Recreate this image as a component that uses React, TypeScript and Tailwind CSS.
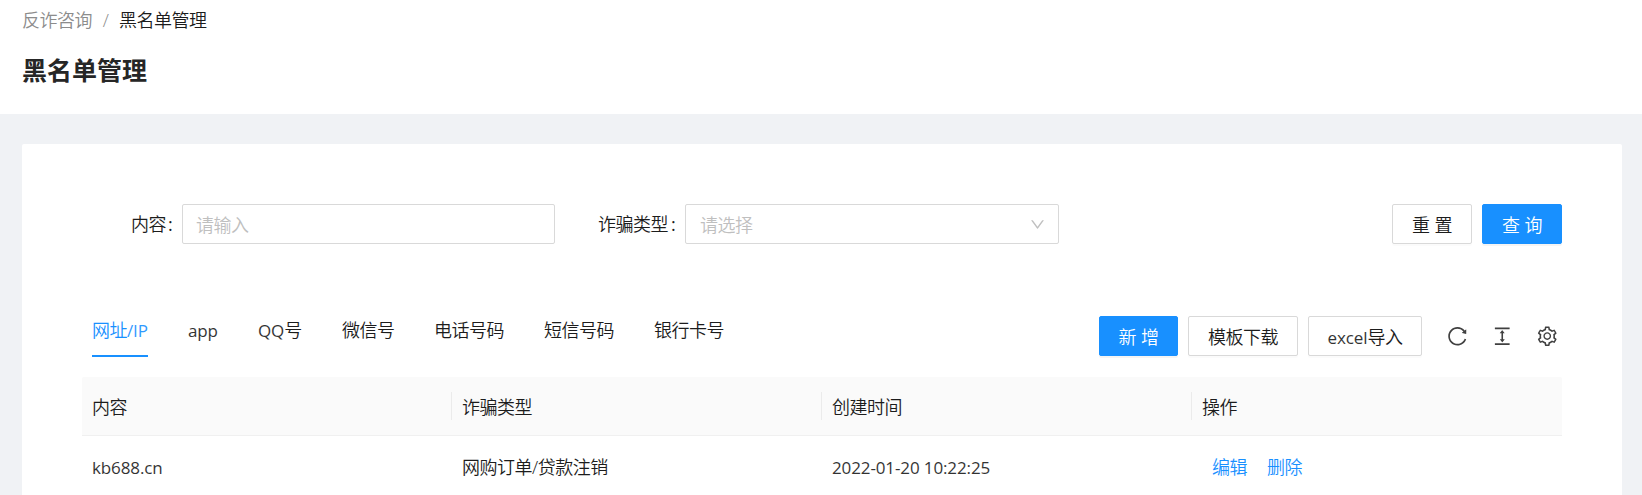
import type { ReactNode } from "react";
import {
  AiOutlineColumnHeight,
  AiOutlineDown,
  AiOutlineReload,
  AiOutlineSetting,
} from "react-icons/ai";

function Latin({ children }: { children: ReactNode }) {
  return <span className="text-[17px] font-normal tracking-[-0.12px] opacity-90">{children}</span>;
}

const tabs = [
  { key: "url", label: <>网址<Latin>/IP</Latin></>, width: "w-14" },
  { key: "app", label: <Latin>app</Latin>, width: "w-[30px]" },
  { key: "qq", label: <><Latin>QQ</Latin>号</>, width: "w-11" },
  { key: "wechat", label: "微信号", width: "w-[52px]" },
  { key: "phone", label: "电话号码", width: "w-[70px]" },
  { key: "sms", label: "短信号码", width: "w-[70px]" },
  { key: "bank", label: "银行卡号", width: "w-[70px]" },
];

const columns = ["内容", "诈骗类型", "创建时间", "操作"];

const buttonBase =
  "flex h-10 items-center justify-center whitespace-nowrap rounded-[2px] border pt-[3px]";
const defaultButton =
  "border-[#d9d9d9] bg-white text-[#1c1c1c] shadow-[0_2px_0_rgba(0,0,0,0.016)]";
const primaryButton =
  "border-[#1890ff] bg-[#1890ff] text-white shadow-[0_2px_0_rgba(0,0,0,0.045)]";

function Button({
  primary,
  className,
  children,
}: {
  primary?: boolean;
  className: string;
  children: ReactNode;
}) {
  return (
    <button className={`${buttonBase} ${primary ? primaryButton : defaultButton} ${className}`}>
      {children}
    </button>
  );
}

export default function App() {
  return (
    <div className="h-[495px] overflow-hidden bg-[#f0f2f5] font-['Open_Sans','Noto_Sans_CJK_SC',sans-serif] text-[18px] leading-[27.5px] font-[350] tracking-[-0.5px] text-[#1c1c1c]">
      <header className="h-[114px] bg-white px-[22px] pt-[7px]">
        <nav className="flex">
          <span className="text-[#8c8c8c]">反诈咨询</span>
          <span className="w-[27px] text-center text-[#8c8c8c]">/</span>
          <span>黑名单管理</span>
        </nav>
        <h1 className="mt-[15px] text-[25px] leading-10 font-bold tracking-normal text-[#262626]">
          黑名单管理
        </h1>
      </header>

      <main className="mt-[30px] mr-5 ml-[22px] h-[400px] rounded-[2px] bg-white px-[60px] pt-[60px]">
        <form className="flex h-10 items-center">
          <label className="w-[100px] pt-0.5 pl-[49px] whitespace-nowrap">
            内容<span className="pl-0.5 font-normal">:</span>
          </label>
          <input
            className="h-10 w-[373px] rounded-[2px] border border-[#d9d9d9] pt-0.5 pl-[13px] tracking-[-0.5px] placeholder:text-[#bfbfbf]"
            placeholder="请输入"
          />
          <label className="w-[130px] pt-0.5 pl-[43px] whitespace-nowrap">
            诈骗类型<span className="pl-[3px] font-normal">:</span>
          </label>
          <div className="flex h-10 w-[374px] items-center justify-between rounded-[2px] border border-[#d9d9d9] pr-3 pl-[14px] text-[#bfbfbf]">
            <span className="pt-[3px]">请选择</span>
            <AiOutlineDown size={17} />
          </div>
          <div className="ml-auto flex gap-2.5">
            <Button className="w-20 gap-[5px]">
              <span>重</span>
              <span>置</span>
            </Button>
            <Button primary className="w-20 gap-[5px]">
              <span>查</span>
              <span>询</span>
            </Button>
          </div>
        </form>

        <div className="mt-[72px] flex">
          <div className="flex gap-10 pl-2.5">
            {tabs.map((tab, i) => (
              <div
                key={tab.key}
                className={`h-[41px] pt-px whitespace-nowrap ${tab.width} ${
                  i === 0 ? "border-b-2 border-[#1890ff] text-[#1890ff]" : ""
                }`}
              >
                {tab.label}
              </div>
            ))}
          </div>
          <div className="ml-auto flex gap-2.5">
            <Button primary className="w-[79px] gap-[5px]">
              <span>新</span>
              <span>增</span>
            </Button>
            <Button className="w-[110px]">模板下载</Button>
            <Button className="w-[114px]">
              <span>
                <Latin>excel</Latin>导入
              </span>
            </Button>
            <div className="flex h-10 items-center gap-[22.5px] pr-[3.75px] pl-[13.75px] text-[#404040]">
              <AiOutlineReload size={22.5} />
              <AiOutlineColumnHeight size={22.5} />
              <AiOutlineSetting size={22.5} />
            </div>
          </div>
        </div>

        <div className="mt-5">
          <div className="grid h-[59px] grid-cols-4 items-center rounded-t-[2px] border-b border-[#f0f0f0] bg-[#fafafa]">
            {columns.map((name, i) => (
              <div
                key={name}
                className={`flex h-7 items-center pt-[3px] ${
                  i === 0 ? "pl-2.5" : "-ml-px border-l border-[#ebebeb] pl-2.5"
                }`}
              >
                {name}
              </div>
            ))}
          </div>
          <div className="grid h-16 grid-cols-4 items-center">
            <div className="pl-2.5">
              <Latin>kb688.cn</Latin>
            </div>
            <div className="pl-2.5">网购订单/贷款注销</div>
            <div className="pl-2.5">
              <Latin>2022-01-20 10:22:25</Latin>
            </div>
            <div className="flex gap-5 pl-5 text-[#1890ff]">
              <a>编辑</a>
              <a>删除</a>
            </div>
          </div>
        </div>
      </main>
    </div>
  );
}
